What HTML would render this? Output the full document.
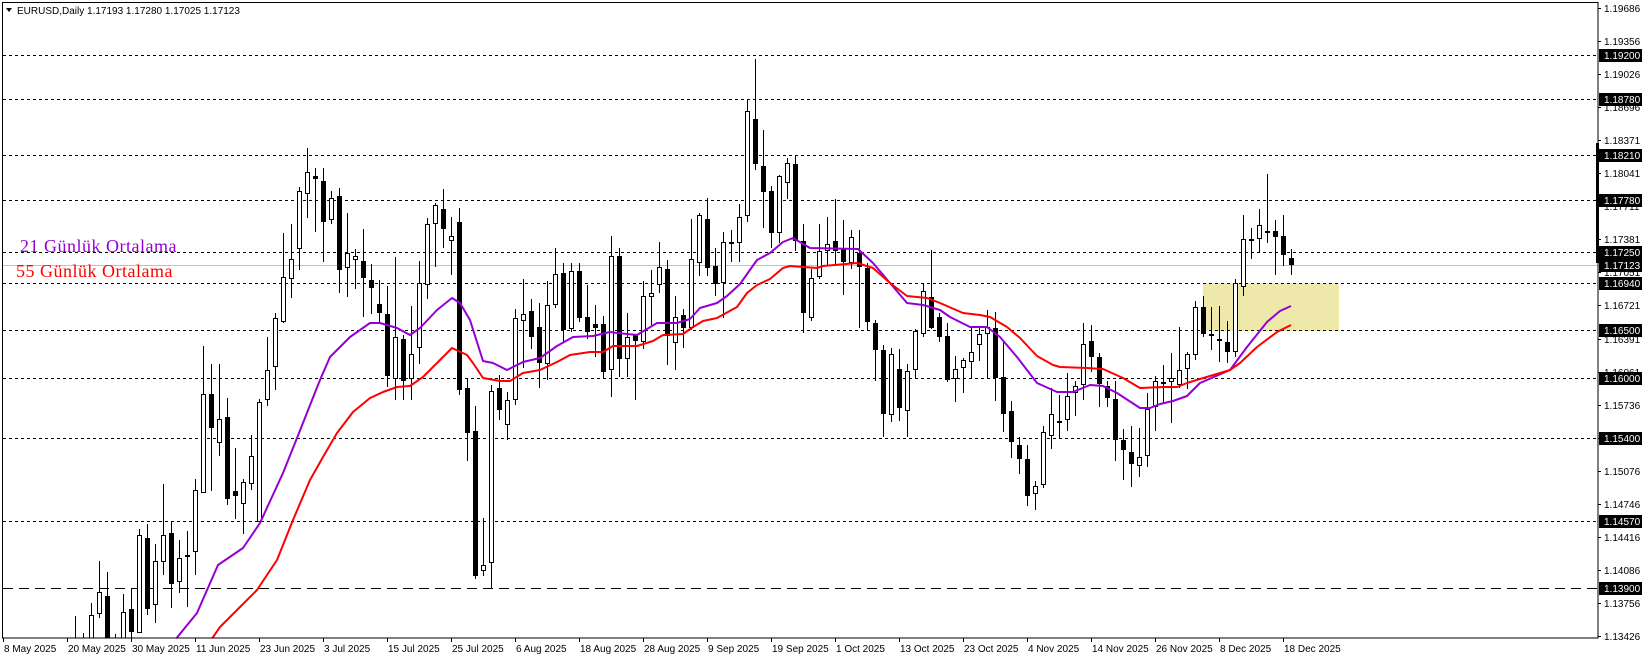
<!DOCTYPE html>
<html><head><meta charset="utf-8">
<style>
html,body{margin:0;padding:0;background:#fff;width:1644px;height:659px;overflow:hidden}
svg{display:block}
text{font-family:"Liberation Sans",Arial,sans-serif}
</style></head>
<body>
<svg id="c" width="1644" height="659" xmlns="http://www.w3.org/2000/svg" shape-rendering="crispEdges">
<defs><clipPath id="pc"><rect x="2" y="2" width="1596" height="636"/></clipPath></defs>
<rect x="0" y="0" width="1644" height="659" fill="#fff"/>
<rect x="1203" y="283" width="136" height="48" fill="#EEE8AA"/>
<g id="lv"></g>
<line x1="2" y1="265.5" x2="1598" y2="265.5" stroke="#c0c0c0" stroke-width="1"/>
<g id="cd" clip-path="url(#pc)"></g>
<g clip-path="url(#pc)" shape-rendering="auto" fill="none" stroke-width="2" stroke-linejoin="round">
<polyline stroke="#9400D3" points="175,640 197,613 218,565 243,548 260,523 283,473 297,438 320,380 330,357 350,337 370,323 380,323 397,328 410,335 420,328 437,310 452,298 460,303 470,320 483,361 493,363 507,370 523,362 540,358 557,346 573,337 593,336 610,332 617,333 637,335 657,323 677,323 690,319 700,308 717,303 727,296 740,284 757,260 770,253 783,242 793,238 810,248 858,249 873,263 890,283 907,303 923,305 940,310 950,317 970,327 987,327 1000,337 1017,357 1037,383 1057,392 1073,392 1090,385 1103,386 1117,393 1140,408 1150,408 1160,404 1173,401 1187,396 1200,383 1230,370 1247,347 1267,322 1280,311 1291,306"/>
<polyline stroke="#FF0000" points="211,640 220,627 240,607 257,590 277,560 293,520 310,480 323,457 337,433 353,412 370,398 383,392 397,387 410,386 423,377 437,363 452,348 467,355 473,363 483,378 500,381 510,381 523,373 540,370 557,362 570,355 590,352 603,352 613,346 637,346 653,341 663,335 683,334 693,327 703,321 717,318 737,307 747,293 757,285 770,279 783,268 790,266 803,267 817,268 823,266 857,263 873,268 890,283 907,296 927,298 940,303 963,313 980,315 990,317 1007,327 1020,338 1037,356 1053,365 1060,367 1087,368 1103,369 1123,378 1140,388 1163,387 1177,387 1187,383 1200,379 1230,370 1240,363 1257,347 1277,332 1291,325"/>
</g>
<rect x="2.5" y="2.5" width="1595.5" height="635.5" fill="none" stroke="#000" stroke-width="1"/>
<rect x="1596" y="143" width="3" height="120" fill="#000"/>
<g id="ax"></g>
<g id="dt"></g>
<polygon points="6,8 12,8 9,12" fill="#000" shape-rendering="auto"/>
<text x="17" y="14" font-size="10" fill="#000">EURUSD,Daily  1.17193 1.17280 1.17025 1.17123</text>
<text x="20" y="252" font-size="18" letter-spacing="0.5" fill="#9400D3" style="font-family:'Liberation Serif',serif">21 Günlük Ortalama</text>
<text x="16" y="277" font-size="18" letter-spacing="0.5" fill="#FF0000" style="font-family:'Liberation Serif',serif">55 Günlük Ortalama</text>
</svg>
<script>
(function(){
var NS="http://www.w3.org/2000/svg";
function el(p,t,a,txt){var e=document.createElementNS(NS,t);for(var k in a)e.setAttribute(k,a[k]);if(txt!==undefined)e.textContent=txt;p.appendChild(e);return e;}
var D={9:[640,640,616,645],10:[640,640,633,645],11:[640,615,603,645],12:[614,592,561,618],13:[596,640,572,645],14:[640,640,634,645],15:[640,612,594,645],16:[609,632,588,640],17:[633,535,529,633],18:[538,609,524,615],19:[605,561,544,623],20:[562,535,484,575],21:[533,584,521,608],22:[582,558,540,593],23:[555,556,531,607],24:[552,490,479,575],25:[493,394,346,493],26:[394,428,364,491],27:[443,419,364,456],28:[417,499,398,505],29:[491,496,448,519],30:[504,482,479,534],31:[484,456,435,490],32:[522,402,399,522],33:[400,370,337,406],34:[367,318,313,390],35:[322,277,233,323],36:[279,259,224,298],37:[249,191,187,270],38:[194,172,148,218],39:[176,179,168,232],40:[181,222,168,262],41:[220,198,191,224],42:[196,270,188,293],43:[268,253,213,297],44:[260,256,249,289],45:[261,278,229,317],46:[280,288,264,314],47:[304,313,280,322],48:[314,376,286,387],49:[379,337,257,400],50:[339,381,335,400],51:[379,354,306,400],52:[348,283,261,364],53:[285,224,218,299],54:[224,205,203,267],55:[209,229,189,248],56:[241,236,217,275],57:[222,390,208,395],58:[388,433,378,461],59:[431,576,406,579],60:[571,565,518,576],61:[563,391,385,588],62:[388,410,375,420],63:[425,400,392,440],64:[400,318,309,405],65:[321,314,279,368],66:[311,337,299,349],67:[327,363,303,388],68:[364,305,281,380],69:[305,274,248,308],70:[273,330,263,343],71:[329,271,263,332],72:[271,318,263,322],73:[317,332,285,339],74:[324,328,305,357],75:[324,372,316,378],76:[370,256,236,397],77:[256,359,248,377],78:[359,337,313,377],79:[335,341,335,400],80:[342,296,281,349],81:[297,293,270,325],82:[285,267,242,293],83:[269,336,260,365],84:[343,317,296,370],85:[315,328,309,348],86:[328,259,219,330],87:[263,215,213,276],88:[219,268,198,276],89:[266,284,248,296],90:[283,242,232,318],91:[244,242,230,262],92:[243,217,204,262],93:[216,111,99,222],94:[119,164,59,170],95:[166,192,130,228],96:[191,233,186,248],97:[233,176,175,243],98:[183,163,158,199],99:[164,241,155,251],100:[241,313,224,333],101:[318,278,269,321],102:[277,251,224,279],103:[251,244,217,266],104:[241,251,199,266],105:[249,262,220,295],106:[263,237,230,269],107:[253,267,230,328],108:[268,322,263,330],109:[323,350,320,381],110:[350,414,345,437],111:[415,354,348,422],112:[369,408,349,421],113:[411,371,364,437],114:[370,331,329,378],115:[334,291,283,337],116:[297,328,250,329],117:[317,337,313,342],118:[336,380,323,382],119:[379,369,356,402],120:[368,360,358,393],121:[362,352,328,378],122:[345,334,328,361],123:[334,327,310,378],124:[328,378,312,401],125:[377,414,341,432],126:[411,442,401,458],127:[445,459,437,474],128:[459,496,445,506],129:[494,486,481,510],130:[485,432,426,488],131:[436,414,388,449],132:[421,422,395,438],133:[420,396,373,431],134:[393,386,381,416],135:[385,344,323,400],136:[341,357,325,372],137:[357,384,353,407],138:[386,398,381,407],139:[399,440,381,461],140:[440,450,429,480],141:[452,464,426,487],142:[466,457,428,477],143:[456,409,393,467],144:[407,381,376,431],145:[382,383,365,403],146:[382,378,353,423],147:[385,370,327,388],148:[369,354,352,389],149:[355,307,301,360],150:[307,334,296,337],151:[334,335,307,350],152:[339,341,306,362],153:[342,352,321,363],154:[352,283,279,357],155:[287,239,215,296],156:[239,240,228,259],157:[239,225,209,252],158:[231,232,174,243],159:[231,237,220,275],160:[236,255,215,266],161:[258,265,249,275]};
var cd=document.getElementById("cd");
Object.keys(D).forEach(function(key){var idx=parseInt(key,10),d=D[key],x=3+8*idx,o=d[0],c=d[1],h=d[2],l=d[3];
 el(cd,"rect",{x:x,y:h,width:1,height:Math.max(1,l-h),fill:"#000"});
 var t0=Math.min(o,c),b0=Math.max(o,c);
 if(b0-t0<=2){el(cd,"rect",{x:x-2,y:t0,width:5,height:2,fill:"#000"});}
 else if(c>o){el(cd,"rect",{x:x-2,y:t0,width:5,height:b0-t0,fill:"#000"});}
 else{el(cd,"rect",{x:x-2,y:t0,width:5,height:b0-t0,fill:"#000"});el(cd,"rect",{x:x-1,y:t0+1,width:3,height:b0-t0-2,fill:"#fff"});}
});
var lv=document.getElementById("lv"),ax=document.getElementById("ax");
var levels=[[55,"1.19200"],[99,"1.18780"],[155,"1.18210"],[200,"1.17780"],[252,"1.17250"],[283,"1.16940"],[330,"1.16500"],[378,"1.16000"],[438,"1.15400"],[521,"1.14570"],[588,"1.13900"]];
var sv=["1.19686","1.19356","1.19026","1.18696","1.18371","1.18041","1.17711","1.17381","1.17051","1.16721","1.16391","1.16061","1.15736","1.15406","1.15076","1.14746","1.14416","1.14086","1.13756","1.13426"];
for(var k=0;k<sv.length;k++){var y=8+33.05*k;
 el(ax,"rect",{x:1598,y:Math.round(y),width:3,height:1,fill:"#000"});
 el(ax,"text",{x:1604,y:Math.round(y)+4,"font-size":"10",fill:"#000"},sv[k]);}
levels.forEach(function(L,j){var yy=L[0];
 el(lv,"line",{x1:3,y1:yy+0.5,x2:1598,y2:yy+0.5,stroke:"#000","stroke-width":1,"stroke-dasharray":j==10?"10,6":"3,3"});
 el(ax,"rect",{x:1599,y:yy-6,width:43,height:13,fill:"#000"});
 el(ax,"text",{x:1604,y:yy+4,"font-size":"10",fill:"#fff"},L[1]);});
el(ax,"rect",{x:1599,y:259,width:43,height:13,fill:"#000"});
el(ax,"text",{x:1604,y:269,"font-size":"10",fill:"#fff"},"1.17123");
var dt=document.getElementById("dt");
var dates=["8 May 2025","20 May 2025","30 May 2025","11 Jun 2025","23 Jun 2025","3 Jul 2025","15 Jul 2025","25 Jul 2025","6 Aug 2025","18 Aug 2025","28 Aug 2025","9 Sep 2025","19 Sep 2025","1 Oct 2025","13 Oct 2025","23 Oct 2025","4 Nov 2025","14 Nov 2025","26 Nov 2025","8 Dec 2025","18 Dec 2025"];
dates.forEach(function(s,n){var x=3+64*n;
 el(dt,"rect",{x:x,y:638,width:1,height:4,fill:"#000"});
 el(dt,"text",{x:x+1,y:652,"font-size":"10",fill:"#000"},s);});
})();
</script>
</body></html>
